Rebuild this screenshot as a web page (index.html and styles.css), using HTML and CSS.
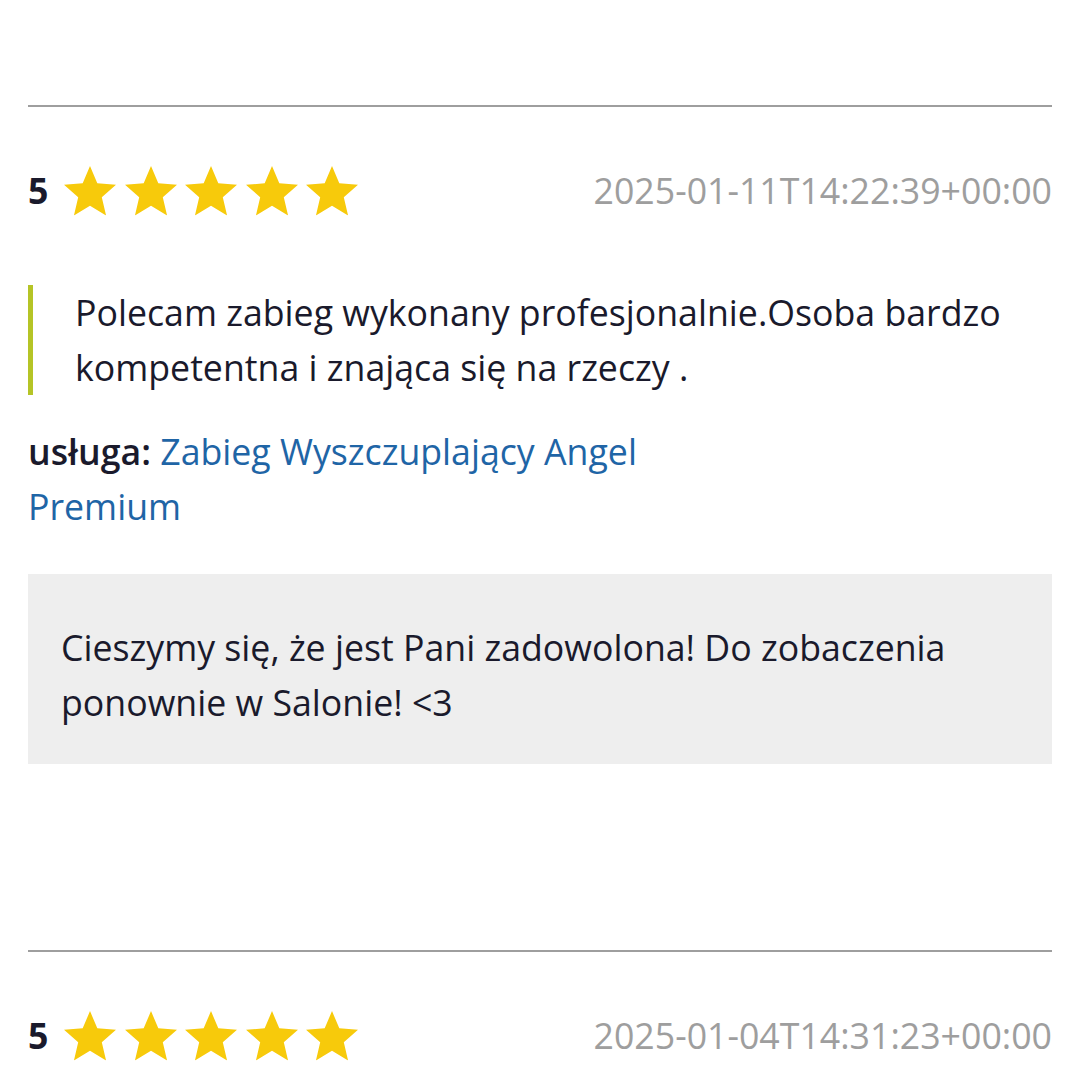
FILE: index.html
```html
<!DOCTYPE html>
<html lang="pl">
<head>
    <meta charset="UTF-8">
    <meta name="viewport" content="width=device-width, initial-scale=1.0">
    <title>Opinie</title>
    <link rel="stylesheet" href="styles.css">
</head>
<body>
    <svg width="0" height="0" class="defs">
        <symbol id="star" viewBox="2 2 20 19">
            <path d="M12 17.27L18.18 21l-1.64-7.03L22 9.24l-7.19-.61L12 2 9.19 8.63 2 9.24l5.46 4.73L5.82 21z"/>
        </symbol>
    </svg>

    <div class="reviews">
        <div class="review">
            <div class="review-head">
                <div class="rating">
                    <span class="score">5</span>
                    <span class="stars">
                        <svg><use href="#star"/></svg>
                        <svg><use href="#star"/></svg>
                        <svg><use href="#star"/></svg>
                        <svg><use href="#star"/></svg>
                        <svg><use href="#star"/></svg>
                    </span>
                </div>
                <time class="date">2025-01-11T14:22:39+00:00</time>
            </div>
            <blockquote class="opinion">
                Polecam zabieg wykonany profesjonalnie.Osoba bardzo kompetentna i znająca się na rzeczy .
            </blockquote>
            <p class="service"><strong>usługa:</strong> <a href="#">Zabieg Wyszczuplający Angel Premium</a></p>
            <div class="reply">
                Cieszymy się, że jest Pani zadowolona! Do zobaczenia ponownie w Salonie! &lt;3
            </div>
        </div>

        <div class="review">
            <div class="review-head">
                <div class="rating">
                    <span class="score">5</span>
                    <span class="stars">
                        <svg><use href="#star"/></svg>
                        <svg><use href="#star"/></svg>
                        <svg><use href="#star"/></svg>
                        <svg><use href="#star"/></svg>
                        <svg><use href="#star"/></svg>
                    </span>
                </div>
                <time class="date">2025-01-04T14:31:23+00:00</time>
            </div>
        </div>
    </div>
</body>
</html>
```

FILE: styles.css
```css
body {
    font-family: 'Open Sans', 'Noto Sans', sans-serif;
    color: #1a1a2c;
    background: #fff;
    margin: 0;
    font-size: 35.7px;
    line-height: 55px;
}

.defs {
    position: absolute;
}

.reviews {
    padding: 105px 28px 0;
}

.review {
    border-top: 2px solid #9e9e9e;
    padding-top: 55px;
    margin-bottom: 186px;
}

.review-head {
    display: flex;
    justify-content: space-between;
    align-items: center;
    height: 56px;
}

.rating {
    display: flex;
    align-items: center;
}

.score {
    font-weight: 700;
    margin-right: 16px;
}

.stars {
    display: flex;
    gap: 8.5px;
    fill: #f7ca0b;
}

.stars svg {
    width: 52px;
    height: 49.5px;
    margin-top: 2px;
}

.date {
    color: #9e9e9e;
}

.opinion {
    margin: 67px 0 0;
    padding-left: 42px;
    border-left: 5px solid #b5c426;
}

.service {
    margin: 29px 0 0;
    max-width: 700px;
}

.service strong {
    font-weight: 600;
}

.service a {
    color: #1f65a6;
    text-decoration: none;
}

.reply {
    margin-top: 40px;
    background: #eeeeee;
    padding: 46px 33px 34px;
}
```
